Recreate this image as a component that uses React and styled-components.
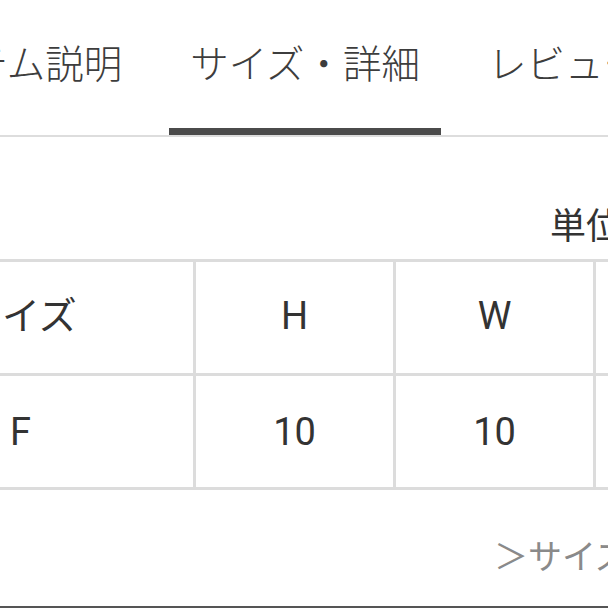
import styled, { createGlobalStyle } from "styled-components";

const GlobalStyle = createGlobalStyle`
  html, body {
    margin: 0;
    padding: 0;
    background: #fff;
    overflow: hidden;
  }
  body {
    font-family: Roboto, "Noto Sans CJK JP", sans-serif;
    color: #333;
  }
`;

const Page = styled.div`
  width: 608px;
  height: 608px;
  overflow: hidden;
  display: flex;
  flex-direction: column;
  border-bottom: 2px solid #555;
  box-sizing: border-box;
`;

const TabBar = styled.div`
  display: flex;
  gap: 26px;
  margin-left: -126px;
  width: 900px;
  border-bottom: 2px solid #ddd;
`;

const Tab = styled.div`
  flex-shrink: 0;
  padding: 0 21px;
  height: 128px;
  line-height: 130px;
  font-size: 38.5px;
  font-weight: 300;
  color: #3d3d3d;
  white-space: nowrap;
  border-bottom: 7px solid ${(p) => (p.$active ? "#4b4b4b" : "transparent")};
`;

const UnitRow = styled.div`
  margin-top: 72px;
  padding-left: 550px;
  font-size: 36px;
  line-height: 36px;
  color: #333;
  white-space: nowrap;
`;

const Table = styled.div`
  margin-top: 14px;
  margin-left: -7px;
  display: grid;
  grid-template-columns: repeat(5, 197px);
  grid-auto-rows: 111px;
  gap: 3px;
  padding: 3px;
  background: #dcdcdc;
  width: max-content;
`;

const Cell = styled.div`
  background: #fff;
  display: flex;
  align-items: center;
  justify-content: ${(p) => (p.$first ? "flex-start" : "center")};
  padding-left: ${(p) => (p.$first ? "14px" : "0")};
  padding-bottom: ${(p) => (p.$head ? "4px" : "0")};
  box-sizing: border-box;
  font-size: 38px;
  line-height: 1;
  color: #333;
  white-space: nowrap;
`;

const Label = styled.span`
  margin-left: ${(p) => p.$shift || 0}px;
`;

const LinkRow = styled.div`
  margin-top: 50px;
  padding-left: 494px;
  font-size: 34px;
  line-height: 34px;
  color: #8a8a8a;
  white-space: nowrap;
`;

const tabs = ["アイテム説明", "サイズ・詳細", "レビュー"];
const head = ["サイズ", "H", "W", "D", "重さ"];
const rows = [["F", "10", "10", "10", "10"]];

export default function App() {
  return (
    <>
      <GlobalStyle />
      <Page>
        <TabBar>
          {tabs.map((t, i) => (
            <Tab key={t} $active={i === 1}>
              {t}
            </Tab>
          ))}
        </TabBar>
        <UnitRow>単位：cm</UnitRow>
        <Table>
          {head.map((h, i) => (
            <Cell key={h} $first={i === 0} $head>
              <Label $shift={i === 0 ? -46 : 0}>{h}</Label>
            </Cell>
          ))}
          {rows.map((r) =>
            r.map((v, i) => (
              <Cell key={i} $first={i === 0}>
                <Label>{v}</Label>
              </Cell>
            ))
          )}
        </Table>
        <LinkRow>＞サイズガイド</LinkRow>
      </Page>
    </>
  );
}
